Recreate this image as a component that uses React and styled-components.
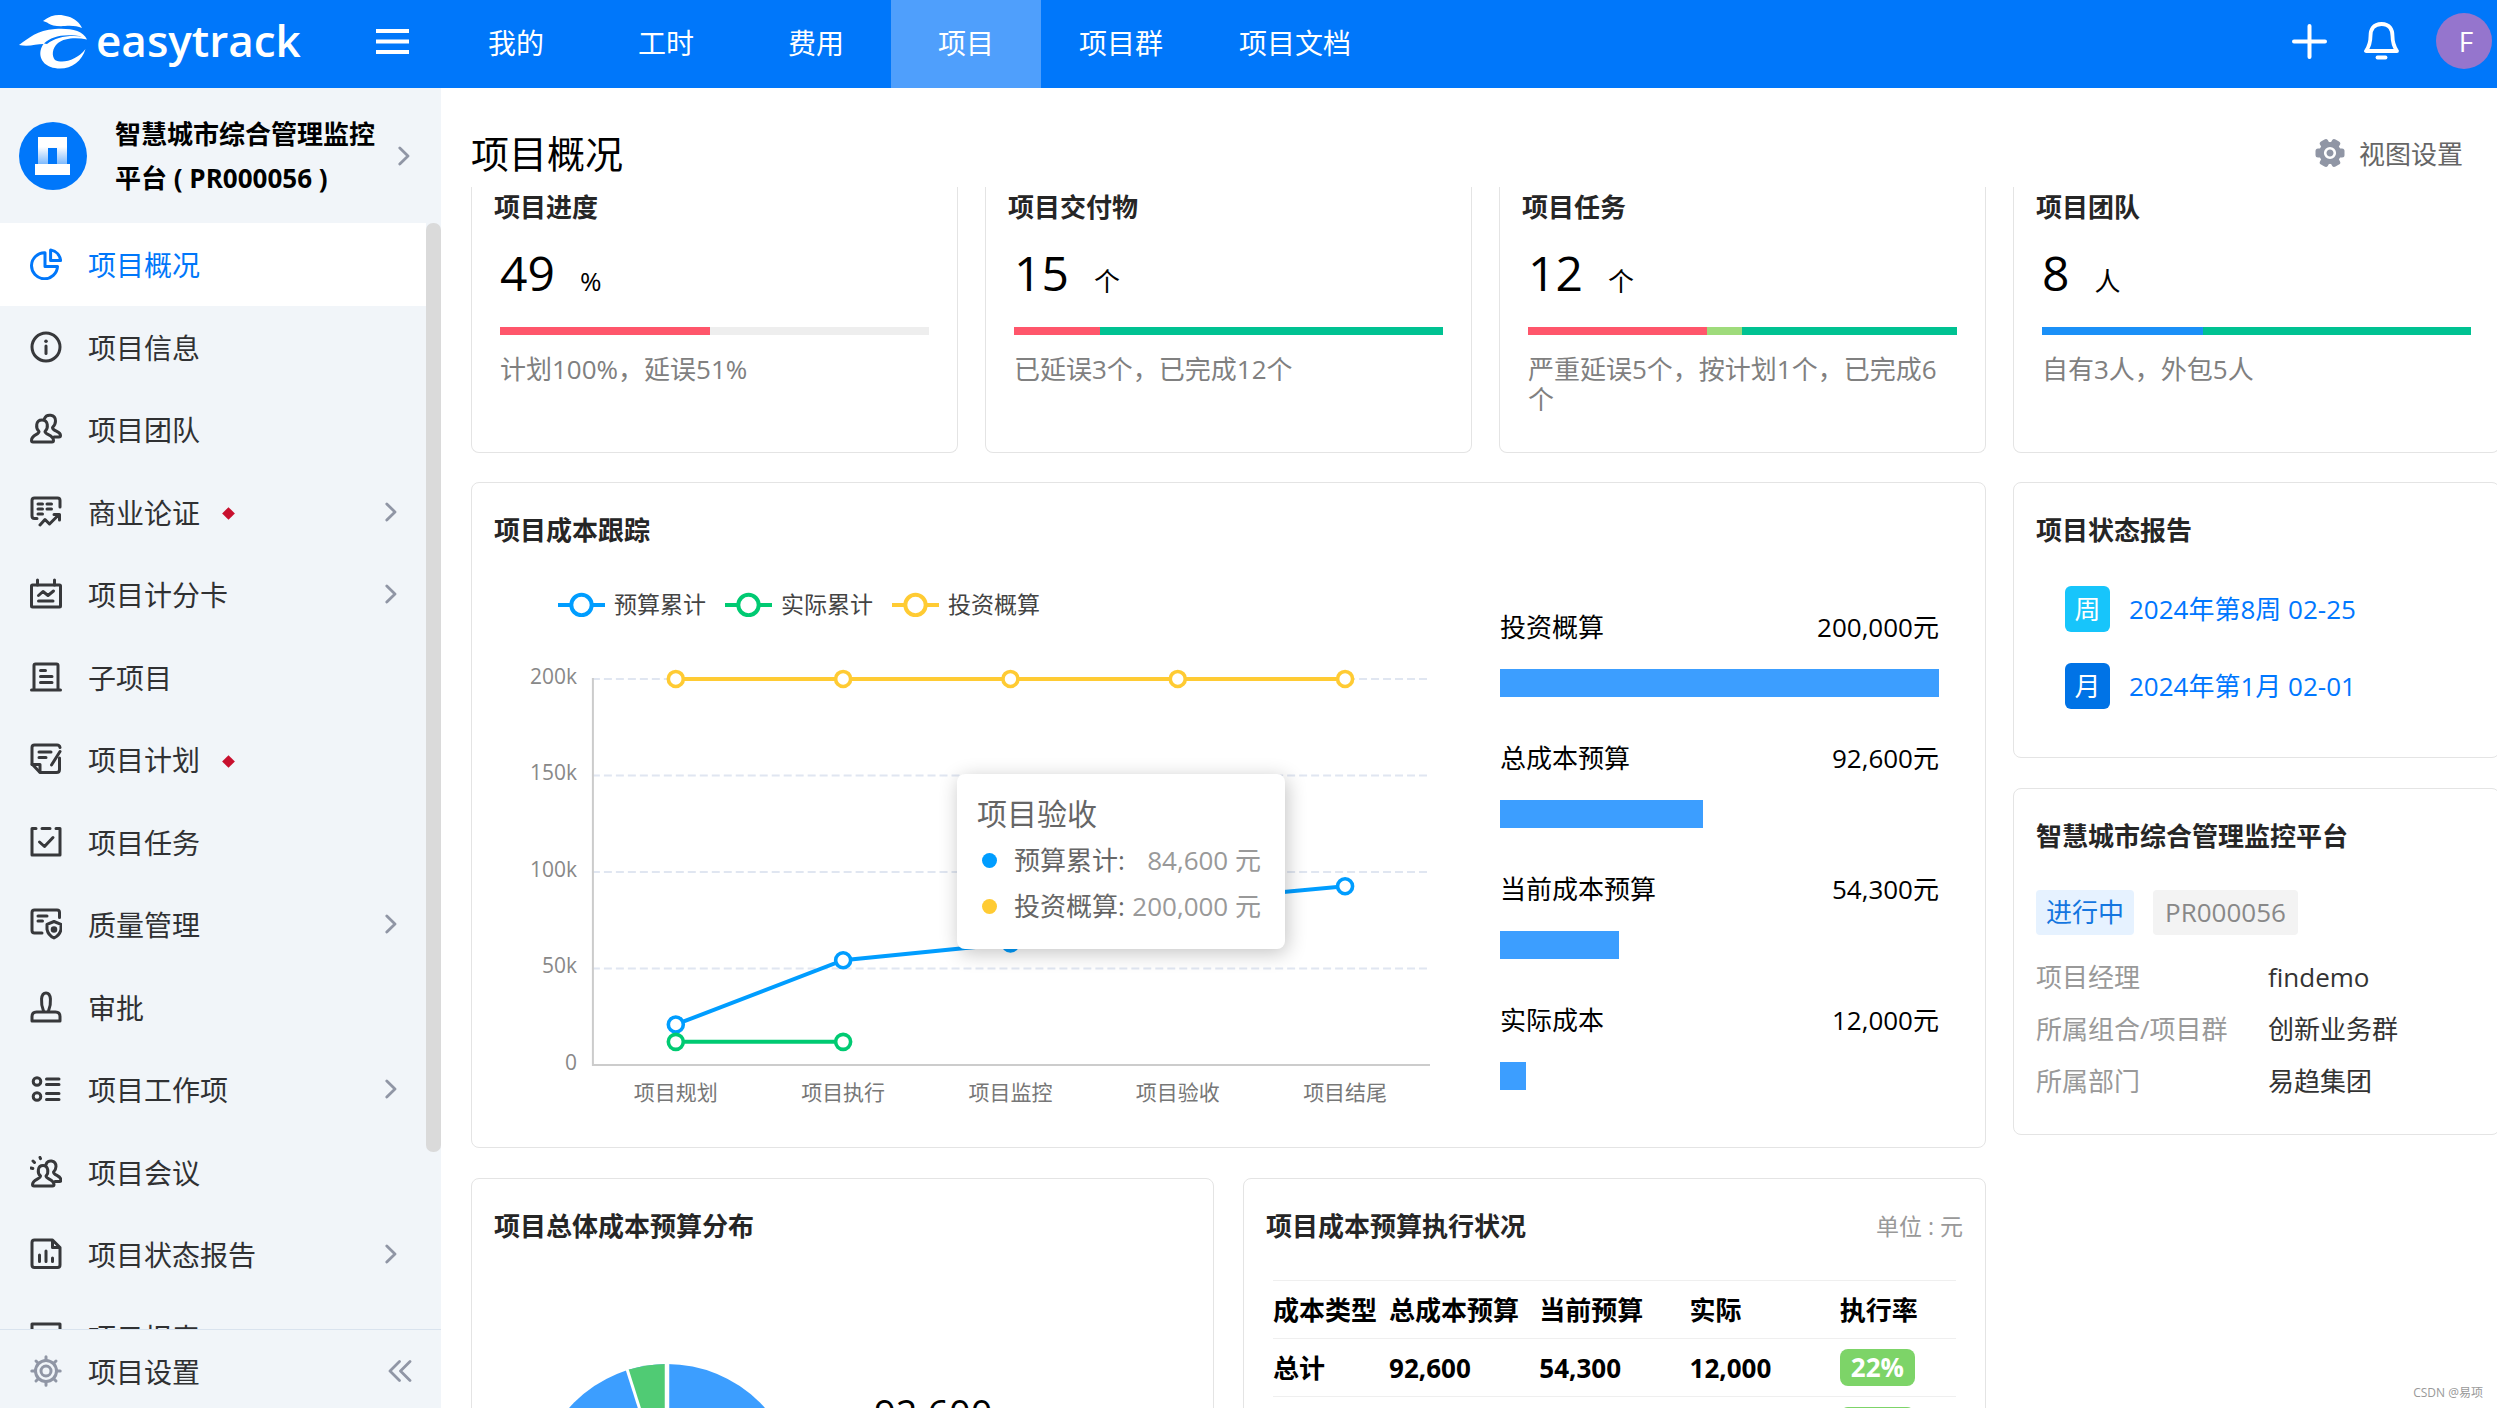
import React from "react";
import styled, { createGlobalStyle, css } from "styled-components";

const GlobalStyle = createGlobalStyle`
  *, *::before, *::after { box-sizing: border-box; }
  body {
    margin: 0;
    background: #fff;
    color: #000;
    font-family: "Open Sans", "Noto Sans CJK SC", sans-serif;
    font-size: 26px;
  }
  h1, h2, p, ul, dl, dd { margin: 0; padding: 0; font-weight: 400; }
  ul { list-style: none; }
  a { color: inherit; text-decoration: none; }
  button { border: 0; padding: 0; background: none; color: inherit; font: inherit; cursor: pointer; }
`;

const Page = styled.div`
  position: relative;
  display: flex;
  flex-direction: column;
  height: 100vh;
  overflow: hidden;
`;

const TopBar = styled.header`
  display: flex;
  flex: none;
  align-items: stretch;
  height: 88px;
  background: #0077fa;
  color: #fff;
`;

const Brand = styled.div`
  display: flex;
  flex: none;
  align-items: center;
  justify-content: space-between;
  width: 441px;
  padding: 0 32px 4px 18px;
`;

const Logo = styled.a`
  display: flex;
  align-items: center;
  gap: 8px;
`;

const Wordmark = styled.span`
  padding-bottom: 4px;
  font-size: 44px;
  line-height: 56px;
  font-weight: 600;
`;

const IconButton = styled.button`
  display: flex;
  align-items: center;
`;

const TopNav = styled.nav`
  display: flex;
  flex: 1;
`;

const TopLink = styled.a`
  display: flex;
  align-items: center;
  justify-content: center;
  min-width: 150px;
  padding: 0 38px 4px;
  font-size: 28px;
  background: ${(p) => (p.$active ? "#4f9ffc" : "transparent")};
`;

const TopTools = styled.div`
  display: flex;
  align-items: center;
  gap: 37px;
  padding: 0 5px 6px 0;
`;

const Avatar = styled.button`
  width: 56px;
  height: 56px;
  padding-left: 4px;
  border-radius: 50%;
  background: #9575cd;
  font-size: 28px;
`;

const Body = styled.div`
  display: flex;
  flex: 1;
  min-height: 0;
`;

const Sidebar = styled.aside`
  display: flex;
  flex: none;
  flex-direction: column;
  width: 441px;
  background: #f1f5f9;
`;

const ProjectSwitch = styled.button`
  display: flex;
  flex: none;
  align-items: center;
  gap: 21px;
  height: 135px;
  padding: 0 31px 0 19px;
  text-align: left;
  font-size: 26px;
  line-height: 44px;
  font-weight: 700;
`;

const ProjectName = styled.span`
  flex: 1;
  padding-left: 7px;
  white-space: nowrap;
`;

const MenuArea = styled.nav`
  display: flex;
  flex: 1;
  min-height: 0;
  overflow: hidden;
`;

const Menu = styled.ul`
  display: flex;
  flex: 1;
  flex-direction: column;
  height: 1155px;
`;

const MenuItem = styled.li`
  flex: 1;
  background: ${(p) => (p.$active ? "#fff" : "transparent")};
`;

const menuRow = css`
  display: flex;
  align-items: center;
  gap: 26px;
  padding: 0 29px 0 30px;
  font-size: 28px;
`;

const MenuLink = styled.a`
  ${menuRow}
  height: 100%;
`;

const MenuLabel = styled.span`
  display: flex;
  flex: 1;
  align-items: center;
  gap: 24px;
  color: ${(p) => (p.$active ? "#0077fa" : "#303133")};
`;

const Diamond = styled.i`
  width: 9px;
  height: 9px;
  margin-top: 4px;
  background: #c8102e;
  transform: rotate(45deg);
`;

const ScrollTrack = styled.div`
  width: 15px;
`;

const ScrollThumb = styled.div`
  height: 84%;
  border-radius: 7px;
  background: #dadada;
`;

const SidebarFoot = styled.div`
  ${menuRow}
  flex: none;
  height: 79px;
  padding-top: 4px;
  border-top: 1px solid #d9e3ee;
`;

const Main = styled.main`
  flex: 1;
  min-width: 0;
  padding-left: 30px;
  overflow: hidden;
`;

const PageHead = styled.div`
  display: flex;
  align-items: center;
  justify-content: space-between;
  height: 99px;
  padding: 30px 34px 0 0;
`;

const PageTitle = styled.h1`
  font-size: 38px;
  line-height: 50px;
`;

const ViewSettings = styled.button`
  display: flex;
  align-items: center;
  gap: 14px;
  color: #666;
`;

const Board = styled.div`
  display: grid;
  grid-template-columns: repeat(4, minmax(0, 1fr));
  gap: 29px 27px;
  margin-right: -3px;
`;

const Card = styled.section`
  padding: 27px 22px 0;
  border: 1px solid #e4e4e4;
  border-radius: 8px;
`;

const StatCard = styled(Card)`
  min-height: 266px;
  padding-top: 0;
  border-top: 0;
  border-radius: 0 0 8px 8px;
`;

const CardTitle = styled.h2`
  font-size: 26px;
  line-height: 40px;
  font-weight: 700;
  color: #262626;
`;

const StatBody = styled.div`
  padding: 16px 6px 0;
`;

const StatValue = styled.p`
  display: flex;
  align-items: baseline;
  gap: 25px;
  font-size: 26px;
  line-height: 60px;
`;

const BigNumber = styled.span`
  font-size: 48px;
`;

const Meter = styled.div`
  display: flex;
  height: 8px;
  margin: 16px 0 19px;
  background: #eee;
`;

const MeterPart = styled.span`
  background: ${(p) => p.$color};
`;

const Caption = styled.p`
  line-height: 30px;
  color: #808080;
`;

const LeftColumn = styled.div`
  grid-column: span 3;
  display: flex;
  flex-direction: column;
  gap: 30px;
`;

const RightColumn = styled.div`
  display: flex;
  flex-direction: column;
  gap: 30px;
`;

const CostBody = styled.div`
  display: grid;
  grid-template-columns: minmax(0, 1fr) 439px;
  gap: 64px;
  padding: 0 24px 38px 0;
`;

const ChartBox = styled.div`
  position: relative;
  padding-top: 38px;
`;

const Legend = styled.ul`
  display: flex;
  gap: 19px;
  padding: 0 0 2px 64px;
  font-size: 23px;
  line-height: 32px;
  color: #444;
`;

const LegendItem = styled.li`
  display: flex;
  align-items: center;
  gap: 9px;
`;

const ChartSvg = styled.svg`
  display: block;
  width: 100%;
  height: auto;
`;

const Tooltip = styled.div`
  position: absolute;
  left: 463px;
  top: 224px;
  width: 328px;
  height: 175px;
  padding: 17px 24px 0 20px;
  border-radius: 8px;
  background: #fff;
  box-shadow: 2px 4px 20px rgba(0, 0, 0, 0.24);
  color: #666;
`;

const TooltipTitle = styled.p`
  font-size: 30px;
  line-height: 46px;
`;

const TooltipRow = styled.p`
  display: flex;
  align-items: center;
  line-height: 46px;
`;

const Dot = styled.i`
  width: 15px;
  height: 15px;
  margin: 0 17px 0 5px;
  border-radius: 50%;
  background: ${(p) => p.$color};
`;

const TooltipValue = styled.span`
  flex: 1;
  text-align: right;
  color: #999;
`;

const CostBars = styled.ul`
  display: flex;
  flex-direction: column;
  gap: 43px;
  padding-top: 59px;
`;

const CostLine = styled.div`
  display: flex;
  justify-content: space-between;
  margin-bottom: 24px;
  line-height: 36px;
`;

const CostBar = styled.div`
  height: 28px;
  background: #3c9eff;
`;

const ReportList = styled.ul`
  display: flex;
  flex-direction: column;
  gap: 31px;
  padding: 36px 0 48px 29px;
`;

const ReportLink = styled.a`
  display: flex;
  align-items: center;
  gap: 19px;
  color: #0077ff;
  line-height: 46px;
`;

const Period = styled.span`
  width: 45px;
  height: 46px;
  border-radius: 6px;
  background: ${(p) => p.$color};
  color: #fff;
  text-align: center;
`;

const Tags = styled.div`
  display: flex;
  gap: 19px;
  padding: 34px 0 16px;
  line-height: 45px;
`;

const Tag = styled.span`
  padding: 0 ${(p) => (p.$primary ? 10 : 12)}px;
  border-radius: 4px;
  background: ${(p) => (p.$primary ? "#e6f2ff" : "#f3f3f3")};
  color: ${(p) => (p.$primary ? "#1476e0" : "#888")};
`;

const Facts = styled.dl`
  display: grid;
  grid-template-columns: 232px 1fr;
  padding-bottom: 27px;
  line-height: 52px;
  color: #333;
  dt { color: #999; }
`;

const BottomRow = styled.div`
  display: grid;
  grid-template-columns: 1fr 1fr;
  gap: 29px;
  height: 420px;
`;

const CardHead = styled.div`
  display: flex;
  align-items: center;
  justify-content: space-between;
`;

const Unit = styled.span`
  font-size: 23px;
  line-height: 40px;
  color: #999;
`;

const PieBody = styled.div`
  display: flex;
  gap: 75px;
  padding: 117px 0 0 41px;
`;

const PieTotal = styled.p`
  padding-top: 20px;
  font-size: 38px;
  line-height: 60px;
`;

const TableWrap = styled.div`
  padding: 34px 7px 0;
`;

const CostTable = styled.table`
  width: 100%;
  border-collapse: collapse;
  table-layout: fixed;
  font-size: 26px;
  line-height: 36px;
  font-weight: 700;
  border-top: 1px solid #efefef;
  tr { height: 58px; border-bottom: 1px solid #efefef; }
  th, td { padding: 0; text-align: left; white-space: nowrap; }
`;

const Rate = styled.span`
  display: block;
  width: 75px;
  height: 37px;
  border-radius: 8px;
  background: #7dd468;
  color: #fff;
  text-align: center;
`;

const Watermark = styled.span`
  position: absolute;
  right: 14px;
  bottom: 6px;
  font-size: 12px;
  line-height: 18px;
  color: #999;
`;

const Glyph = ({ children, color = "#37383b" }) => (
  <svg width="32" height="32" viewBox="0 0 32 32" fill="none" stroke={color} strokeWidth="3" strokeLinecap="round" strokeLinejoin="round" aria-hidden="true">
    {children}
  </svg>
);

const Chevron = () => (
  <svg width="12" height="20" viewBox="0 0 12 20" fill="none" stroke="#9096a5" strokeWidth="2.8" strokeLinecap="round" strokeLinejoin="round" aria-hidden="true">
    <path d="M1.8 2 10 10 1.8 18" />
  </svg>
);

const glyphs = {
  pie: (
    <>
      <path d="M15 4.8A13 13 0 1 0 27.5 18.4H15Z" />
      <path d="M20.6 2C26.5 3 30 7.400 30.600 12.600H20.600Z" />
    </>
  ),
  info: (
    <>
      <circle cx="16" cy="16" r="14" />
      <path d="M16 15v7.500" />
      <circle cx="16" cy="10.300" r="1.800" fill="#37383b" stroke="none" />
    </>
  ),
  team: (
    <>
      <path d="M9 18.500C5.500 15 5.500 7 12 7s6.500 8 3 11.500c0 3.500 8.500 3 8.500 9q0 1.500-1.500 1.500H3q-1.500 0-1.500-1.500c0-6 7.500-5.500 7.500-9Z" />
      <path d="M14.500 5.500C16.500.5 25.500 1 25.500 8c0 3-1 4.500-3 6.500 0 4 8 3.500 8 8q0 1.500-1.500 1.500h-5" />
    </>
  ),
  business: (
    <>
      <path d="M30 11V4.500Q30 2 27.500 2H4.500Q2 2 2 4.500V20q0 2.500 2.500 2.500H7" />
      <path d="M8 8h4.500M17 8h4.500M8 13h4.500M17 13h4.500M8 18h4.500M10 29l5-5.500 4.500 4.500 9-9M24 18.500h5.500V24" />
    </>
  ),
  score: (
    <>
      <rect x="1.500" y="7" width="29" height="22" rx="1" />
      <path d="M7.500 2v5M24.500 2v5M8.500 17.500l4.500-4 5 4 5.500-4.500M8.500 23H23" />
    </>
  ),
  sub: (
    <>
      <path d="M4 29V4.500Q4 3 5.500 3h21Q28 3 28 4.500V29M1.500 29h29" />
      <path d="M10.500 9.500h5M10.500 15.500H22M10.500 21.500H22" />
    </>
  ),
  plan: (
    <>
      <path d="M30 4.500Q29.500 2 27 2H4.500Q2 2 2 4.500V21l8 8.500h16.500q3 0 3-3V15" />
      <path d="M2 21.500h8V29M9 9h12M9 14.500h7M30 8.500 21.500 22" />
    </>
  ),
  task: <path d="M6 2.500H2v26.500h28V2.500h-4M12 2.500h8M9.500 16l5 4.500 8.500-9" />,
  quality: (
    <>
      <path d="M29.500 9.500v-5Q29.500 2 27 2H4.500Q2 2 2 4.500v18Q2 25 4.500 25H12" />
      <path d="M8 8h9M8 13h4.500M24 13.500l7 2.800v5q-1 6-7 8.700-6-2.700-7-8.700v-5Z" />
      <circle cx="24" cy="21.500" r="1.800" fill="#37383b" />
    </>
  ),
  approve: (
    <>
      <path d="M13.500 20C10.500 12 10.500 2 16 2S21.500 12 18.500 20" />
      <path d="M2 30v-4.500Q2 21 6.500 21h19q4.500 0 4.500 4.500V30Z" />
    </>
  ),
  items: (
    <>
      <circle cx="7" cy="8.500" r="3.800" />
      <circle cx="7" cy="23.500" r="3.800" />
      <path d="M16.500 6H29M16.500 11.500H29M16.500 20.500H29M16.500 26.500H29" />
    </>
  ),
  meeting: (
    <>
      <path d="M10.500 20C7 17 7.500 9.500 13 9.500S19 17 16 20c0 3 8 3.500 8 8.500q0 1.500-1.500 1.500H4q-1.500 0-1.500-1.500c0-5 8-5.500 8-8.500Z" />
      <path d="M16 8.500C17.500 3 26 4 26 10.500c0 3-1 4-2.500 5.500 0 3.500 7.500 3.500 7.500 8q0 1.500-1.500 1.500H25M10 1.500l.5 1.200M3 5l1.500 1.500M1 12l1.800.5" />
    </>
  ),
  report: (
    <>
      <path d="M22.500 2H4.500Q2 2 2 4.500v22.500q0 2.500 2.500 2.500h23q2.500 0 2.500-2.500V9.500ZM22.500 2v7.500H30" />
      <path d="M9.500 17v6.500M16 13v10.500M22.500 20v3.500" />
    </>
  ),
  table: <path d="M2 29V3h28V29" />,
  gear: (
    <>
      <circle cx="16" cy="16" r="10.500" />
      <circle cx="16" cy="16" r="5" />
      <path d="M16 1.800v3M16 27.200v3M1.800 16h3M27.200 16h3M6 6l2 2M24 24l2 2M26 6l-2 2M8 24l-2 2" />
    </>
  ),
};

const menu = [
  { label: "项目概况", icon: "pie", active: true },
  { label: "项目信息", icon: "info" },
  { label: "项目团队", icon: "team" },
  { label: "商业论证", icon: "business", mark: true, more: true },
  { label: "项目计分卡", icon: "score", more: true },
  { label: "子项目", icon: "sub" },
  { label: "项目计划", icon: "plan", mark: true },
  { label: "项目任务", icon: "task" },
  { label: "质量管理", icon: "quality", more: true },
  { label: "审批", icon: "approve" },
  { label: "项目工作项", icon: "items", more: true },
  { label: "项目会议", icon: "meeting" },
  { label: "项目状态报告", icon: "report", more: true },
  { label: "项目报表", icon: "table" },
];

const topLinks = ["我的", "工时", "费用", "项目", "项目群", "项目文档"];

const RED = "#ff566b";
const GREEN = "#00c292";
const stats = [
  { title: "项目进度", value: "49", unit: "%", parts: [[49, RED]], note: "计划100%，延误51%" },
  { title: "项目交付物", value: "15", unit: "个", parts: [[20, RED], [80, GREEN]], note: "已延误3个，已完成12个" },
  { title: "项目任务", value: "12", unit: "个", parts: [[41.67, RED], [8.33, "#9fdb7b"], [50, GREEN]], note: "严重延误5个，按计划1个，已完成6个" },
  { title: "项目团队", value: "8", unit: "人", parts: [[37.5, "#1b90f7"], [62.5, GREEN]], note: "自有3人，外包5人" },
];

const series = [
  { name: "预算累计", color: "#009dff", data: [21, 54.3, 63, 84.6, 92.6] },
  { name: "实际累计", color: "#00ca72", data: [12, 12] },
  { name: "投资概算", color: "#ffcb33", data: [200, 200, 200, 200, 200] },
];
const phases = ["项目规划", "项目执行", "项目监控", "项目验收", "项目结尾"];

const costs = [
  { name: "投资概算", value: 200000 },
  { name: "总成本预算", value: 92600 },
  { name: "当前成本预算", value: 54300 },
  { name: "实际成本", value: 12000 },
];

const px = (i) => 182 + i * 167.5;
const py = (v) => 443.5 - (v / 200) * 386.5;

function TrendChart() {
  return (
    <ChartSvg viewBox="0 0 943 488" role="img" aria-label="项目成本跟踪">
      {[50, 100, 150, 200].map((v) => (
        <path key={v} d={`M98 ${py(v)}H937`} stroke="#e0e6f1" strokeWidth="2" strokeDasharray="8 4" />
      ))}
      <path d="M99 56V443.500H937" fill="none" stroke="#ccc" strokeWidth="2" />
      {[0, 50, 100, 150, 200].map((v) => (
        <text key={v} x="83" y={py(v) + 5} fontSize="21" textAnchor="end" fill="#888">
          {v ? `${v}k` : "0"}
        </text>
      ))}
      {phases.map((name, i) => (
        <text key={name} x={px(i)} y="479" fontSize="21" textAnchor="middle" fill="#777">
          {name}
        </text>
      ))}
      {series.map((s) => (
        <g key={s.name} stroke={s.color} strokeWidth="4" fill="none">
          <polyline points={s.data.map((v, i) => `${px(i)},${py(v)}`).join(" ")} />
          {s.data.map((v, i) => (
            <circle key={i} cx={px(i)} cy={py(v)} r="7.500" strokeWidth="3.600" fill="#fff" />
          ))}
        </g>
      ))}
    </ChartSvg>
  );
}

function LogoMark() {
  return (
    <svg width="70" height="56" viewBox="18 13 70 56" fill="#fff" aria-hidden="true">
      <path d="M43 20C52 13 60 13 68 15.500 75 17.500 80 22 82 27 77 25 72 24.500 65 25 57 25.500 51 24.500 48.500 22.500 46.500 21 45 20.500 43 20Z" />
      <path d="M19 44C29 37 37 29 55 28 69 27 83 29 87 38.500 76 36 64 37 58 42 52 47 51.500 55 55 59 63 63 77 59 85.500 48 82 60 72 67.500 60 67.500 46 67.500 39 59 40.500 50 41 47 42 45 43.500 43 36 43 29 46 19 44Z" />
      <path d="M44 42.500C52 35.500 62 32.500 83 35.500 68 33.800 56 36 47 43Z" fill="#0077fa" />
    </svg>
  );
}

function ProjectBadge() {
  return (
    <svg width="68" height="68" viewBox="0 0 68 68" aria-hidden="true">
      <defs>
        <linearGradient id="pillar" x1="0" y1="0" x2="0" y2="1">
          <stop offset="0.35" stopColor="#fff" />
          <stop offset="1" stopColor="#77b6fd" />
        </linearGradient>
      </defs>
      <circle cx="34" cy="34" r="34" fill="#0077fa" />
      <path d="M19 15h29v28H19Z" fill="url(#pillar)" />
      <path d="M29 26h9v17h-9Z" fill="#0077fa" />
      <path d="M16 42h35v11H16Z" fill="#fff" />
    </svg>
  );
}

export default function App() {
  return (
    <Page>
      <GlobalStyle />
      <TopBar>
        <Brand>
          <Logo href="#home">
            <LogoMark />
            <Wordmark>easytrack</Wordmark>
          </Logo>
          <IconButton aria-label="菜单">
            <svg width="33" height="26" viewBox="0 0 33 26" fill="#fff">
              <path d="M0 0h33v4H0zM0 10.500h33v4H0zM0 21h33v4H0z" />
            </svg>
          </IconButton>
        </Brand>
        <TopNav>
          {topLinks.map((t) => (
            <TopLink key={t} href="#nav" $active={t === "项目"}>
              {t}
            </TopLink>
          ))}
        </TopNav>
        <TopTools>
          <IconButton aria-label="新建">
            <svg width="35" height="35" viewBox="0 0 35 35" stroke="#fff" strokeWidth="4" strokeLinecap="round">
              <path d="M17.500 2v31M2 17.500h31" />
            </svg>
          </IconButton>
          <IconButton aria-label="通知">
            <svg width="35" height="38" viewBox="0 0 35 38" fill="none" stroke="#fff" strokeWidth="3.800" strokeLinejoin="round" strokeLinecap="round">
              <path d="M17.500 2C9 2 6.500 8 6.500 14c0 7-1 10-4.500 15h31c-3.500-5-4.500-8-4.500-15 0-6-2.500-12-11-12Z" />
              <path d="M13.500 35.500h8" />
            </svg>
          </IconButton>
          <Avatar>F</Avatar>
        </TopTools>
      </TopBar>

      <Body>
        <Sidebar>
          <ProjectSwitch>
            <ProjectBadge />
            <ProjectName>
              智慧城市综合管理监控
              <br />
              平台 ( PR000056 )
            </ProjectName>
            <Chevron />
          </ProjectSwitch>
          <MenuArea>
            <Menu>
              {menu.map((m) => (
                <MenuItem key={m.label} $active={m.active}>
                  <MenuLink href="#menu">
                    <Glyph color={m.active ? "#0077fa" : undefined}>{glyphs[m.icon]}</Glyph>
                    <MenuLabel $active={m.active}>
                      {m.label}
                      {m.mark && <Diamond />}
                    </MenuLabel>
                    {m.more && <Chevron />}
                  </MenuLink>
                </MenuItem>
              ))}
            </Menu>
            <ScrollTrack>
              <ScrollThumb />
            </ScrollTrack>
          </MenuArea>
          <SidebarFoot>
            <Glyph color="#9096a5">{glyphs.gear}</Glyph>
            <MenuLabel>项目设置</MenuLabel>
            <IconButton aria-label="收起">
              <svg width="24" height="22" viewBox="0 0 24 22" fill="none" stroke="#9096a5" strokeWidth="2.800" strokeLinecap="round" strokeLinejoin="round">
                <path d="M11.500 1.500 2 11l9.500 9.500M22 1.500 12.500 11l9.500 9.500" />
              </svg>
            </IconButton>
          </SidebarFoot>
        </Sidebar>

        <Main>
          <PageHead>
            <PageTitle>项目概况</PageTitle>
            <ViewSettings>
              <svg width="30" height="30" viewBox="-15 -15 30 30" fill="#9096a5">
                {[0, 60, 120].map((a) => (
                  <rect key={a} x="-14.500" y="-4.500" width="29" height="9" rx="2.500" transform={`rotate(${a})`} />
                ))}
                <circle r="11" />
                <circle r="4.800" fill="none" stroke="#fff" strokeWidth="2.600" />
              </svg>
              视图设置
            </ViewSettings>
          </PageHead>

          <Board>
            {stats.map((s) => (
              <StatCard key={s.title}>
                <CardTitle>{s.title}</CardTitle>
                <StatBody>
                  <StatValue>
                    <BigNumber>{s.value}</BigNumber>
                    {s.unit}
                  </StatValue>
                  <Meter>
                    {s.parts.map(([w, c]) => (
                      <MeterPart key={c} $color={c} style={{ width: `${w}%` }} />
                    ))}
                  </Meter>
                  <Caption>{s.note}</Caption>
                </StatBody>
              </StatCard>
            ))}

            <LeftColumn>
              <Card>
                <CardTitle>项目成本跟踪</CardTitle>
                <CostBody>
                  <ChartBox>
                    <Legend>
                      {series.map((s) => (
                        <LegendItem key={s.name}>
                          <svg width="47" height="26" viewBox="0 0 47 26" stroke={s.color} strokeWidth="4" fill="#fff">
                            <path d="M0 14h47" />
                            <circle cx="23.500" cy="14" r="10.200" />
                          </svg>
                          {s.name}
                        </LegendItem>
                      ))}
                    </Legend>
                    <TrendChart />
                    <Tooltip>
                      <TooltipTitle>项目验收</TooltipTitle>
                      <TooltipRow>
                        <Dot $color="#009dff" />
                        预算累计:
                        <TooltipValue>84,600 元</TooltipValue>
                      </TooltipRow>
                      <TooltipRow>
                        <Dot $color="#ffcb33" />
                        投资概算:
                        <TooltipValue>200,000 元</TooltipValue>
                      </TooltipRow>
                    </Tooltip>
                  </ChartBox>
                  <CostBars>
                    {costs.map((c) => (
                      <li key={c.name}>
                        <CostLine>
                          <span>{c.name}</span>
                          <span>{c.value.toLocaleString("en-US")}元</span>
                        </CostLine>
                        <CostBar style={{ width: `${c.value / 2000}%` }} />
                      </li>
                    ))}
                  </CostBars>
                </CostBody>
              </Card>

              <BottomRow>
                <Card>
                  <CardTitle>项目总体成本预算分布</CardTitle>
                  <PieBody>
                    <svg width="264" height="264" viewBox="-132 -132 264 264" aria-hidden="true">
                      <circle r="131" fill="#3c9eff" />
                      <path d="M0 0V-131A131 131 0 0 0-39.600-124.900Z" fill="#50cb74" />
                      <path d="M0 0V-132" stroke="#fff" strokeWidth="4.500" />
                      <path d="M0 0-40-126" stroke="#fff" strokeWidth="3" />
                    </svg>
                    <PieTotal>92,600</PieTotal>
                  </PieBody>
                </Card>
                <Card>
                  <CardHead>
                    <CardTitle>项目成本预算执行状况</CardTitle>
                    <Unit>单位 : 元</Unit>
                  </CardHead>
                  <TableWrap>
                    <CostTable>
                      <colgroup>
                        <col width="17%" />
                        <col width="22%" />
                        <col width="22%" />
                        <col width="22%" />
                        <col width="17%" />
                      </colgroup>
                      <thead>
                        <tr>
                          <th>成本类型</th>
                          <th>总成本预算</th>
                          <th>当前预算</th>
                          <th>实际</th>
                          <th>执行率</th>
                        </tr>
                      </thead>
                      <tbody>
                        <tr>
                          <td>总计</td>
                          <td>92,600</td>
                          <td>54,300</td>
                          <td>12,000</td>
                          <td><Rate>22%</Rate></td>
                        </tr>
                        <tr>
                          <td />
                          <td />
                          <td />
                          <td />
                          <td><Rate /></td>
                        </tr>
                      </tbody>
                    </CostTable>
                  </TableWrap>
                </Card>
              </BottomRow>
            </LeftColumn>

            <RightColumn>
              <Card>
                <CardTitle>项目状态报告</CardTitle>
                <ReportList>
                  <li>
                    <ReportLink href="#week">
                      <Period $color="#17c5fb">周</Period>
                      2024年第8周 02-25
                    </ReportLink>
                  </li>
                  <li>
                    <ReportLink href="#month">
                      <Period $color="#0073e6">月</Period>
                      2024年第1月 02-01
                    </ReportLink>
                  </li>
                </ReportList>
              </Card>
              <Card>
                <CardTitle>智慧城市综合管理监控平台</CardTitle>
                <Tags>
                  <Tag $primary>进行中</Tag>
                  <Tag>PR000056</Tag>
                </Tags>
                <Facts>
                  <dt>项目经理</dt>
                  <dd>findemo</dd>
                  <dt>所属组合/项目群</dt>
                  <dd>创新业务群</dd>
                  <dt>所属部门</dt>
                  <dd>易趋集团</dd>
                </Facts>
              </Card>
            </RightColumn>
          </Board>
        </Main>
      </Body>
      <Watermark>CSDN @易项</Watermark>
    </Page>
  );
}
